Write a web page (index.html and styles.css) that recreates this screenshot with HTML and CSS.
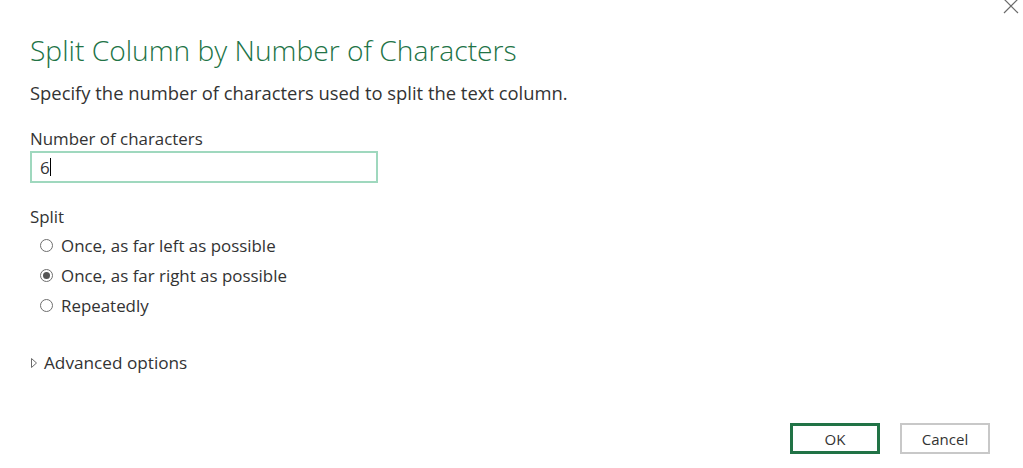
FILE: index.html
```html
<!DOCTYPE html>
<html lang="en">
<head>
<meta charset="utf-8">
<title>Split Column by Number of Characters</title>
<link rel="stylesheet" href="styles.css">
</head>
<body>
<div class="dialog">
  <button class="close" aria-label="Close">
    <svg width="16" height="16" viewBox="0 0 16 16"><path d="M1 1L15 15M15 1L1 15" stroke="#6b6b6b" stroke-width="1.2" fill="none"/></svg>
  </button>
  <h1 class="title">Split Column by Number of Characters</h1>
  <p class="desc">Specify the number of characters used to split the text column.</p>
  <div class="field">
    <label class="label">Number of characters</label>
    <div class="input"><span class="value">6</span><span class="caret"></span></div>
  </div>
  <div class="group">
    <div class="label">Split</div>
    <div class="radios">
      <div class="radio"><span class="dot"></span><span>Once, as far left as possible</span></div>
      <div class="radio checked"><span class="dot"></span><span>Once, as far right as possible</span></div>
      <div class="radio"><span class="dot"></span><span>Repeatedly</span></div>
    </div>
  </div>
  <div class="advanced">
    <svg class="tri" width="8" height="12" viewBox="0 0 8 12"><path d="M1.5 1.5L6.5 6L1.5 10.5Z" fill="none" stroke="#6b6b6b" stroke-width="1"/></svg>
    <span>Advanced options</span>
  </div>
  <div class="buttons">
    <button class="btn ok">OK</button>
    <button class="btn cancel">Cancel</button>
  </div>
</div>
</body>
</html>
```

FILE: styles.css
```css
html, body {
  margin: 0;
  padding: 0;
  background: #ffffff;
}
body {
  font-family: "Open Sans", "Noto Sans", "Liberation Sans", sans-serif;
  color: #333333;
}
.dialog {
  position: relative;
  width: 1023px;
  height: 468px;
  box-sizing: border-box;
  padding: 0 0 0 30px;
  display: flex;
  flex-direction: column;
}
.close {
  position: absolute;
  top: -2px;
  right: 4px;
  border: 0;
  background: none;
  padding: 0;
  width: 16px;
  height: 16px;
}
.close svg { display: block; }
.title {
  margin: 30px 0 0 0;
  font-size: 28.2px;
  font-weight: 300;
  line-height: 40px;
  color: #217346;
}
.desc {
  margin: 10px 0 0 0;
  font-size: 18.4px;
  line-height: 26px;
}
.field {
  margin-top: 22px;
  display: flex;
  flex-direction: column;
}
.label {
  font-size: 16.9px;
  line-height: 22px;
}
.input {
  margin-top: 1px;
  width: 348px;
  height: 32px;
  box-sizing: border-box;
  border: 2px solid #9fd8be;
  display: flex;
  align-items: center;
  padding-left: 8px;
  font-size: 17px;
}
.caret {
  width: 1px;
  height: 18px;
  background: #000;
}
.group {
  margin-top: 23px;
}
.radios {
  padding-left: 10px;
  display: flex;
  flex-direction: column;
  margin-top: 2px;
}
.radio {
  display: flex;
  align-items: center;
  gap: 8px;
  height: 30px;
  font-size: 16.9px;
}
.dot {
  width: 13px;
  height: 13px;
  box-sizing: border-box;
  border: 1px solid #6e6e6e;
  border-radius: 50%;
  display: flex;
  align-items: center;
  justify-content: center;
}
.checked .dot::after {
  content: "";
  width: 7px;
  height: 7px;
  border-radius: 50%;
  background: #555555;
}
.advanced {
  margin-top: 32px;
  display: flex;
  align-items: center;
  gap: 6px;
  font-size: 17.2px;
  line-height: 22px;
}
.tri { display: block; }
.buttons {
  margin-top: auto;
  margin-bottom: 14px;
  align-self: flex-end;
  margin-right: 33px;
  display: flex;
  gap: 20px;
}
.btn {
  width: 90px;
  height: 31px;
  box-sizing: border-box;
  background: #ffffff;
  font-family: inherit;
  font-size: 15px;
  color: #333333;
  padding: 0;
}
.ok {
  border: 3px solid #217346;
}
.cancel {
  border: 2px solid #c8c8c8;
}
```
